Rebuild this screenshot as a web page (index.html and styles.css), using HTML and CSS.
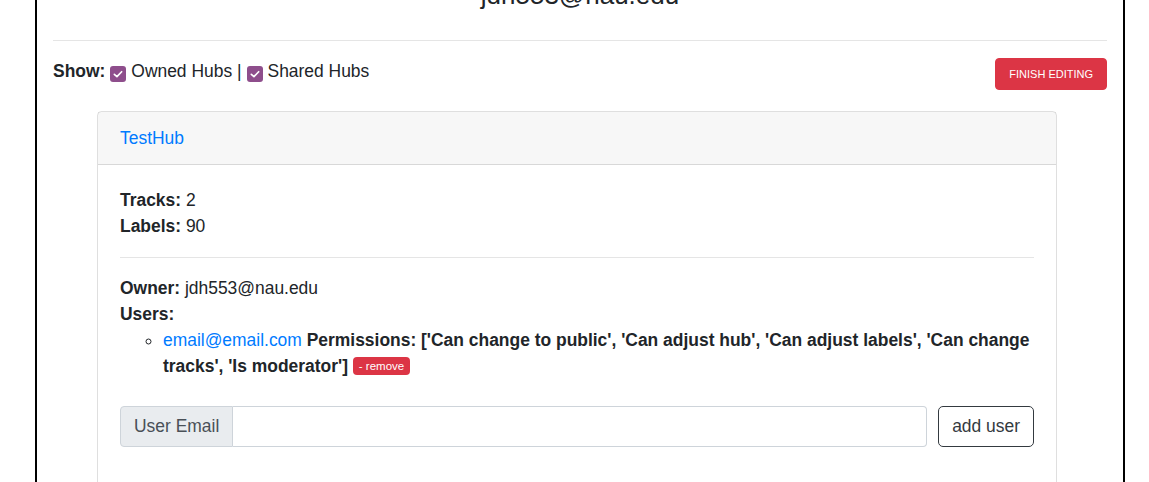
FILE: index.html
```html
<!DOCTYPE html>
<html>
<head>
<meta charset="utf-8">
<link rel="stylesheet" href="styles.css">
</head>
<body>
<div class="page">
  <h2 class="title">jdh553@nau.edu</h2>
  <hr class="rule">
  <div class="toolbar">
    <div class="filters">
      <b>Show:</b>
      <span class="check"><svg viewBox="0 0 16 16" width="14" height="14"><path d="M3.8 8.3 6.8 11 12.2 5.4" fill="none" stroke="#fff" stroke-width="1.9" stroke-linecap="round" stroke-linejoin="round"/></svg></span>
      <span>Owned Hubs |</span>
      <span class="check"><svg viewBox="0 0 16 16" width="14" height="14"><path d="M3.8 8.3 6.8 11 12.2 5.4" fill="none" stroke="#fff" stroke-width="1.9" stroke-linecap="round" stroke-linejoin="round"/></svg></span>
      <span>Shared Hubs</span>
    </div>
    <button class="btn-finish">FINISH EDITING</button>
  </div>
  <div class="card">
    <div class="card-header"><a href="#" class="hub-link">TestHub</a></div>
    <div class="card-body">
      <div class="line"><b>Tracks:</b> 2</div>
      <div class="line"><b>Labels:</b> 90</div>
      <hr class="inner-rule">
      <div class="line"><b>Owner:</b> jdh553@nau.edu</div>
      <div class="line"><b>Users:</b></div>
      <ul class="users">
        <li><a href="#" class="user-link">email@email.com</a> <b>Permissions: ['Can change to public', 'Can adjust hub', 'Can adjust labels', 'Can change tracks', 'Is moderator']</b> <span class="badge">- remove</span></li>
      </ul>
      <div class="add-row">
        <div class="input-group">
          <span class="prepend">User Email</span>
          <input class="email-input" type="text">
        </div>
        <button class="btn-add">add user</button>
      </div>
    </div>
  </div>
</div>
</body>
</html>
```

FILE: styles.css
```css
* { box-sizing: border-box; }
html, body { margin: 0; padding: 0; background: #fff; }
body {
  font-family: "Liberation Sans", Arial, sans-serif;
  font-size: 17.45px;
  line-height: 1.5;
  color: #212529;
  overflow: hidden;
  height: 482px;
}
.page {
  margin-left: 35px;
  width: 1090px;
  border-left: 2px solid #000;
  border-right: 2px solid #000;
  padding: 0 16px;
  margin-top: -20px;
  min-height: 600px;
}
.title {
  margin: 0;
  text-align: center;
  font-weight: 400;
  font-size: 26px;
  line-height: 31px;
}
.rule {
  border: 0;
  border-top: 1px solid rgba(0,0,0,.1);
  margin: 29px 0 0;
}
.toolbar {
  display: flex;
  justify-content: space-between;
  align-items: flex-start;
  padding-top: 17px;
}
.filters {
  display: flex;
  align-items: center;
  gap: 5px;
  line-height: 26px;
}
.check {
  display: inline-flex;
  align-items: center;
  justify-content: center;
  width: 16px;
  height: 16px;
  background: #8e4e8c;
  border-radius: 3px;
  margin-top: 6px;
}
.btn-finish {
  background: #dc3545;
  color: #fff;
  border: 1px solid #dc3545;
  border-radius: 4px;
  font-family: "Liberation Sans", Arial, sans-serif;
  font-size: 11px;
  height: 32px;
  padding: 0 13px;
  margin-top: 0;
}
.card {
  margin: 21px 0 0 44px;
  width: 960px;
  border: 1px solid rgba(0,0,0,.125);
  border-radius: 4.4px;
}
.card-header {
  background: rgba(0,0,0,.03);
  border-bottom: 1px solid rgba(0,0,0,.125);
  padding: 13px 22px;
  height: 53px;
}
.hub-link, .user-link { color: #007bff; text-decoration: none; }
.card-body { padding: 22px; min-height: 330px; }
.line { line-height: 26px; }
.inner-rule {
  border: 0;
  border-top: 1px solid rgba(0,0,0,.1);
  margin: 18px 0 17px;
}
.users {
  list-style: circle;
  margin: 0 0 27px;
  padding-left: 43px;
  line-height: 26px;
}
.badge {
  display: inline-block;
  background: #dc3545;
  color: #fff;
  font-size: 11.5px;
  line-height: 12px;
  padding: 3px 6px;
  border-radius: 4px;
  vertical-align: 2px;
  font-weight: 400;
}
.add-row {
  display: flex;
  gap: 11px;
  align-items: stretch;
}
.input-group {
  flex: 1;
  display: flex;
  height: 41px;
}
.prepend {
  display: flex;
  align-items: center;
  padding: 0 13px;
  background: #e9ecef;
  color: #495057;
  border: 1px solid #ced4da;
  border-radius: 4px 0 0 4px;
  white-space: nowrap;
}
.email-input {
  flex: 1;
  border: 1px solid #ced4da;
  border-left: 0;
  border-radius: 0 4px 4px 0;
  height: 41px;
  font-size: 17.45px;
}
.btn-add {
  background: #fff;
  color: #343a40;
  border: 1px solid #343a40;
  border-radius: 5px;
  font-family: "Liberation Sans", Arial, sans-serif;
  font-size: 17.45px;
  height: 41px;
  padding: 0 13px;
}
```
